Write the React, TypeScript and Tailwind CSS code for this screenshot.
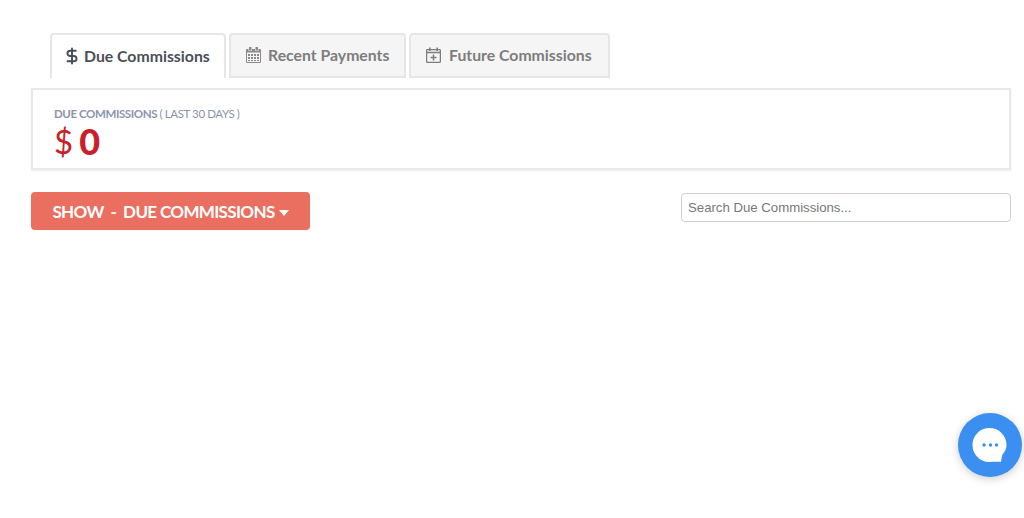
import { DollarSign } from "lucide-react";

const font = { fontFamily: "Lato, sans-serif" };

function CalendarGrid() {
  return (
    <svg width="15" height="16" viewBox="0 0 15 16" fill="#8a8a8a">
      <path d="M3 0h2.500v3.500H3zM9.500 0H12v3.500H9.500z" />
      <path d="M1 2h1.500v2h3.500V2h3v2h3.500V2H14a1 1 0 0 1 1 1v12a1 1 0 0 1-1 1H1a1 1 0 0 1-1-1V3a1 1 0 0 1 1-1zm0 3.500V15h13V5.500zM2 7h2v2H2zm3 0h2v2H5zm3 0h2v2H8zm3 0h2v2h-2zM2 10h2v2H2zm3 0h2v2H5zm3 0h2v2H8zm3 0h2v2h-2zM2 13h2v1H2zm3 0h2v1H5zm3 0h2v1H8zm3 0h2v1h-2z" fillRule="evenodd" />
    </svg>
  );
}

function CalendarAdd() {
  return (
    <svg width="15" height="16" viewBox="0 0 15 16" fill="none" stroke="#7d7d7d" strokeWidth="1.3">
      <rect x="0.6" y="2.600" width="13.800" height="12.800" rx="0.8" />
      <path d="M0.600 5.500h13.800M3.800 0.500v3.500M11.200 0.500v3.500" strokeWidth="1.600" />
      <path d="M7.500 7.500v6M4.500 10.500h6" strokeWidth="1.500" />
    </svg>
  );
}

export default function App() {
  const tabClass =
    "flex h-[45px] items-center rounded-t-[4px] border-2 border-[#e6e6e6] bg-[#f5f5f5] pb-[2px] pl-[15px] text-[15.8px] font-bold text-[#7d7d7d]";

  return (
    <div className="relative h-[518px] w-[1024px] overflow-hidden bg-white" style={font}>
      <div className="pl-[50px] pt-[33px]">
        <div className="flex gap-[3px]">
          <div className="flex h-[45px] w-[176px] items-center gap-[3px] rounded-t-[4px] border-2 border-b-0 border-[#e6e6e6] bg-white pb-[2px] pl-[11px] text-[15.8px] font-bold text-[#4a4f57]">
            <DollarSign size={18} strokeWidth={2.6} />
            Due Commissions
          </div>
          <div className={`${tabClass} w-[177px] gap-[7px]`}>
            <CalendarGrid />
            Recent Payments
          </div>
          <div className={`${tabClass} w-[201px] gap-[8px]`}>
            <CalendarAdd />
            Future Commissions
          </div>
        </div>
      </div>

      <div className="mx-[31px] mt-[10px] h-[82px] w-[980px] border-2 border-[#e8e8e8] px-[21px] pt-[17px] shadow-[0_1px_2px_rgba(0,0,0,0.08)]">
        <div className="text-[11.5px] leading-[14px] tracking-[-0.4px] text-[#8a94ad]">
          <span className="font-bold">DUE COMMISSIONS</span> ( LAST 30 DAYS )
        </div>
        <div className="mt-[1px] flex items-center gap-[6px] leading-[38px] text-[#c9202a]">
          <span className="text-[33px]">$</span>
          <span className="text-[36px] font-black">0</span>
        </div>
      </div>

      <div className="mx-[31px] mt-[22px] flex w-[980px] items-start justify-between">
        <div className="flex h-[38px] w-[279px] items-center justify-center gap-[4px] rounded-[4px] bg-[#ea6f60] pt-[2px] text-[17px] font-bold tracking-[-0.65px] text-white">
          <span className="whitespace-pre">SHOW  -  DUE COMMISSIONS</span>
          <span className="mt-[1px] h-0 w-0 border-x-[5px] border-t-[6px] border-x-transparent border-t-white" />
        </div>
        <input
          placeholder="Search Due Commissions..."
          className="mt-[1px] h-[29px] w-[330px] rounded-[4px] border border-[#cfcfcf] px-[6px] text-[13.2px] outline-none placeholder:text-[#777777]"
          style={{ fontFamily: "'Liberation Sans', sans-serif" }}
        />
      </div>

      {/* floating chat launcher */}
      <div className="absolute left-[958px] top-[413px] flex h-16 w-16 items-center justify-center rounded-full bg-[#3a8ff0] shadow-[0_2px_8px_rgba(0,0,0,0.2)]">
        <svg width="36" height="36" viewBox="0 0 36 36">
          <path d="M17.500 1C8 1 .5 8.500 .5 18s7.500 17 17 17c4 0 8-.3 11.500 0 .5-2.500.5-5 1.500-7.500 2.500-3 4-6 4-9.500C34.500 8.500 27 1 17.500 1z" fill="#fff" />
          <circle cx="12" cy="18" r="1.700" fill="#3a8ff0" />
          <circle cx="18.500" cy="18" r="1.700" fill="#3a8ff0" />
          <circle cx="24.500" cy="18" r="1.700" fill="#3a8ff0" />
        </svg>
      </div>
    </div>
  );
}
